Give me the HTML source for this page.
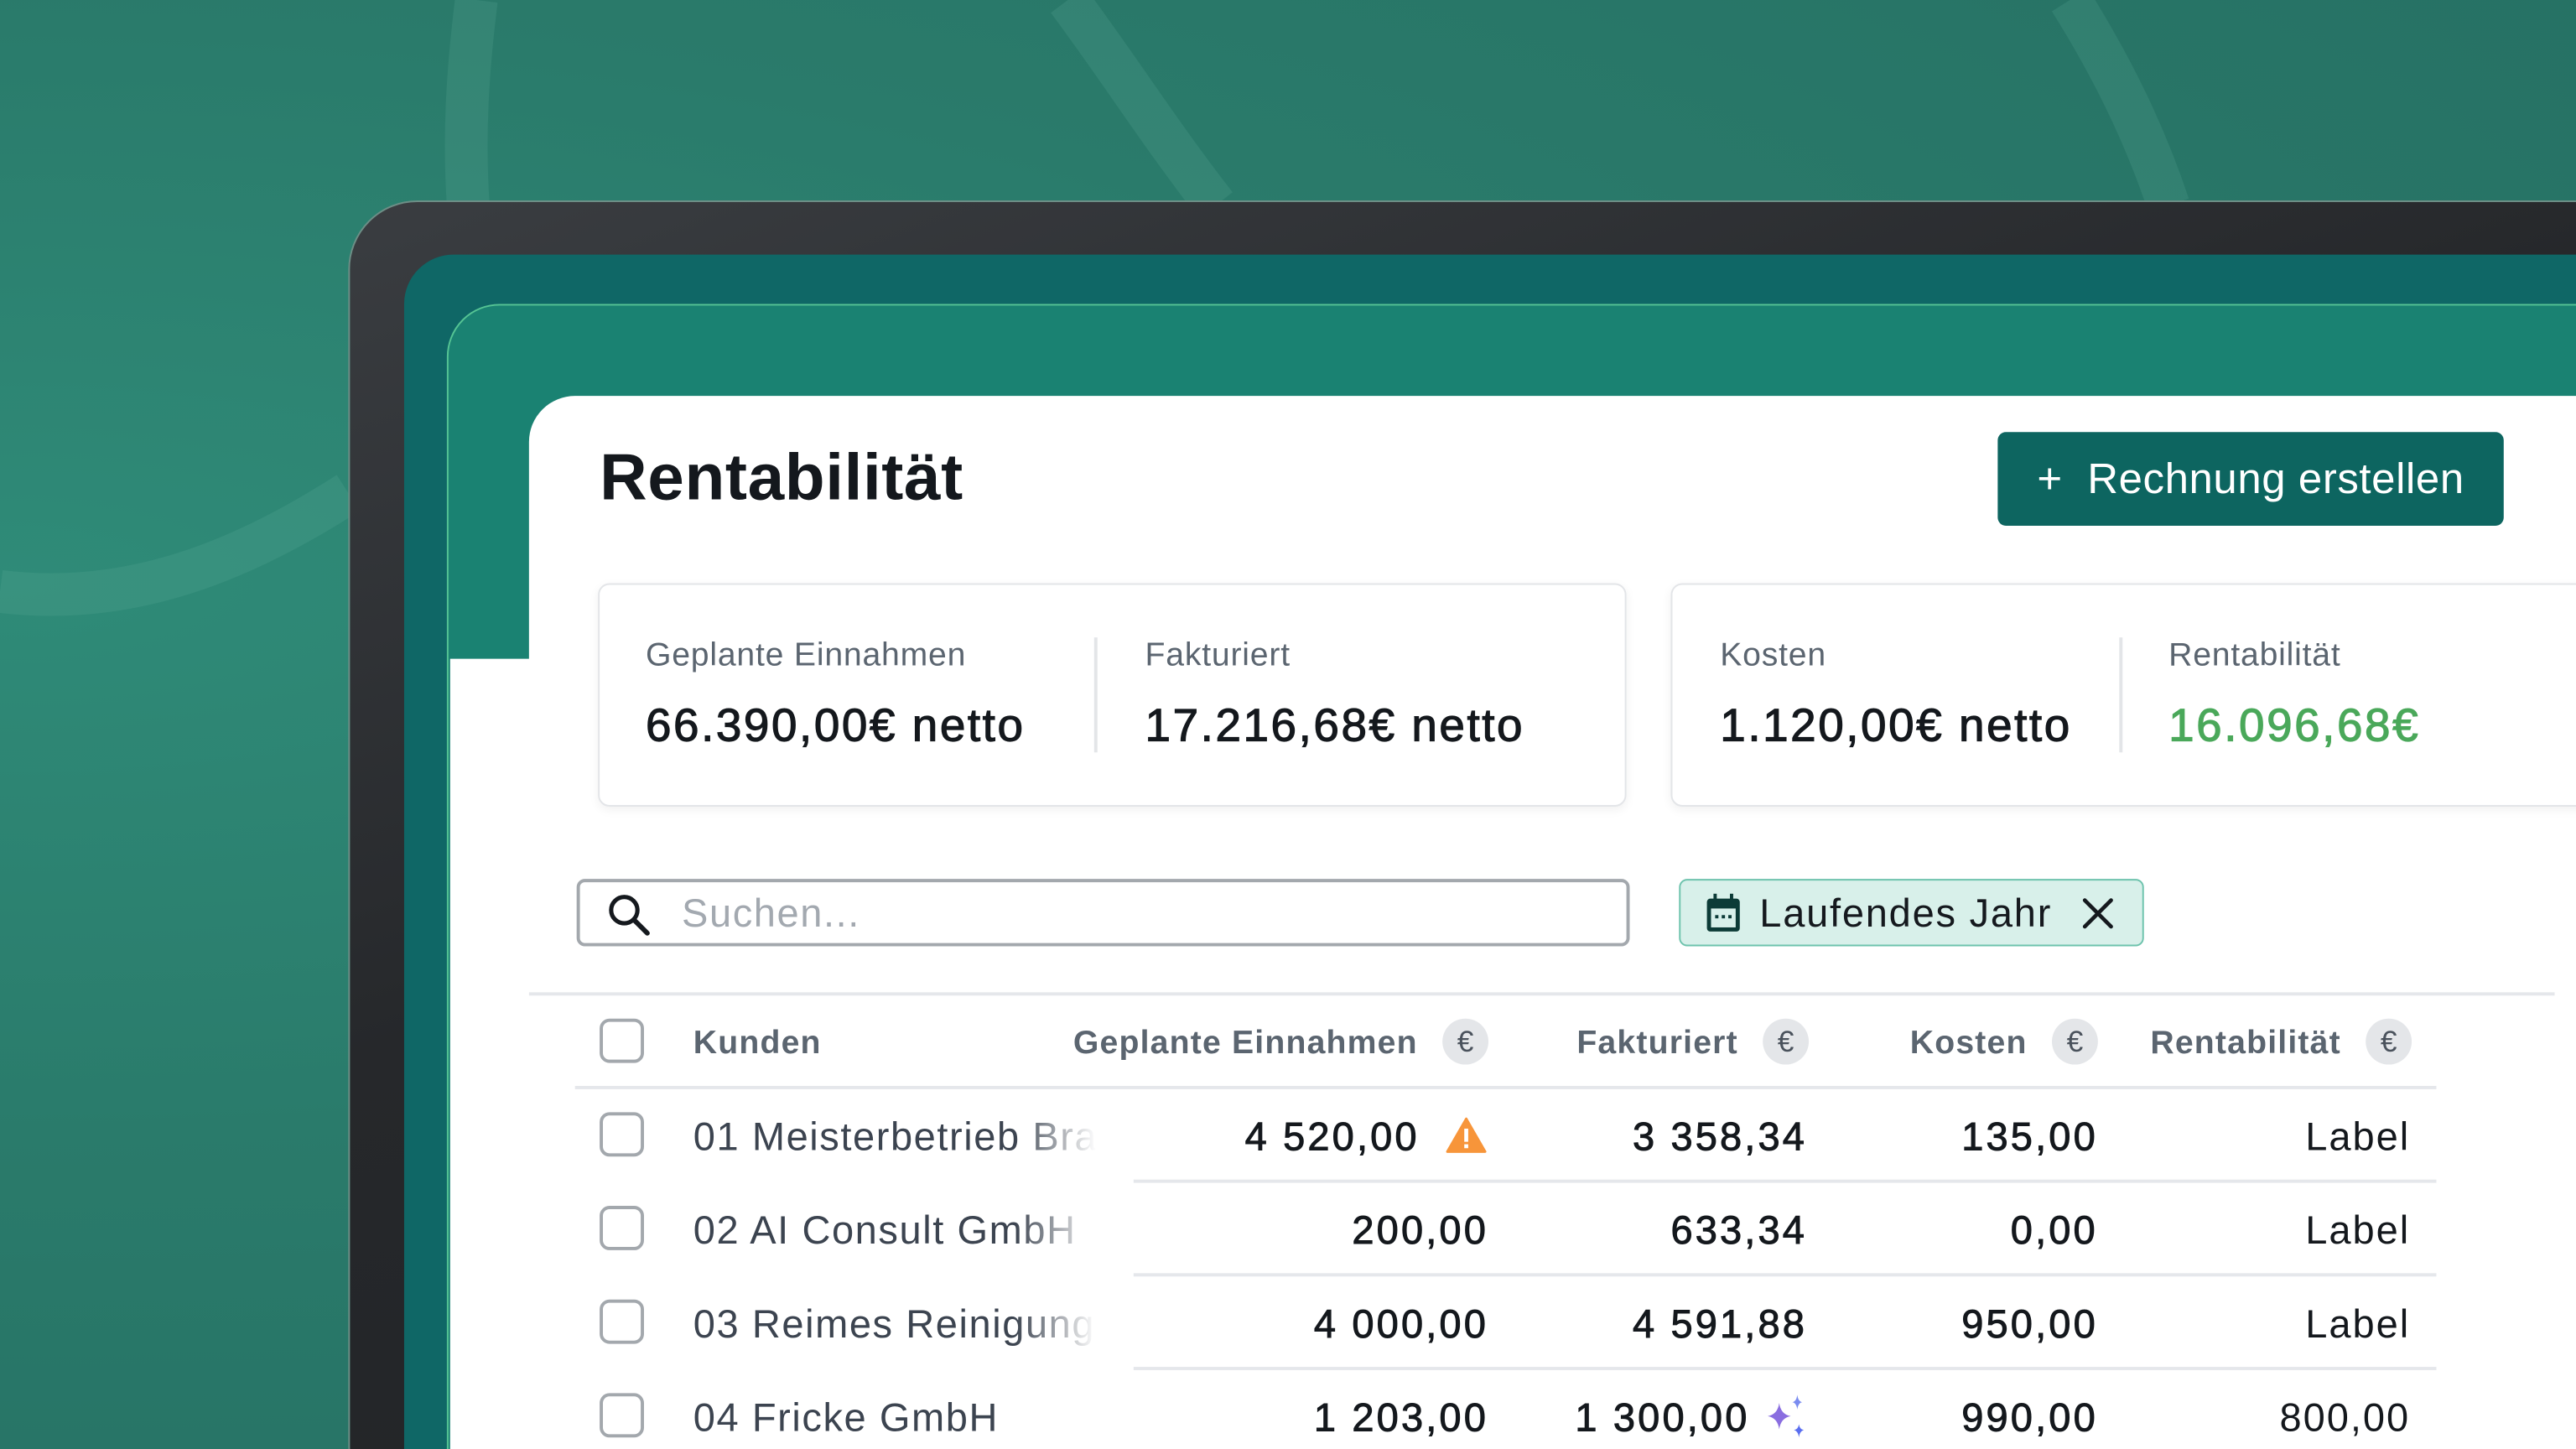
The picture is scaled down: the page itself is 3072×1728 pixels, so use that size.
<!DOCTYPE html>
<html><head><meta charset="utf-8"><style>
*{margin:0;padding:0;box-sizing:border-box}
html,body{width:3072px;height:1728px;overflow:hidden;background:#2a7a6b}
#w{position:absolute;left:0;top:0;width:1568px;height:882px;transform:scale(1.95918);transform-origin:0 0;overflow:hidden;font-family:"Liberation Sans",sans-serif;background:radial-gradient(ellipse at 0% 40%,#2f8b78 0%,#2a7b6b 45%,#256e62 100%)}
.a{position:absolute}
.t{position:absolute;white-space:nowrap}
.lbl{font-size:20px;color:#5b6570;letter-spacing:0.4px}
.val{font-size:28px;color:#14181d;letter-spacing:1.3px;-webkit-text-stroke:0.6px #14181d}
.hd{font-size:20px;color:#5b6570;font-weight:bold;letter-spacing:0.6px}
.eu{position:absolute;width:28px;height:28px;border-radius:50%;background:#e4e6e9;color:#4a525c;font-size:18px;text-align:center;line-height:28px}
.cb{position:absolute;left:365px;width:27px;height:27px;border:2px solid #a3a8ad;border-radius:6px;background:#fff}
.num{position:absolute;font-size:24px;color:#14181d;text-align:right;white-space:nowrap;letter-spacing:1.6px;-webkit-text-stroke:0.5px #14181d}
.nm{position:absolute;left:422px;font-size:24px;color:#3c4450;white-space:nowrap;width:245px;overflow:hidden;letter-spacing:0.8px;-webkit-mask-image:linear-gradient(90deg,#000 80%,transparent 100%)}
.ln{position:absolute;height:2px;background:#e5e7eb}
</style></head><body><div id="w">
<svg class="a" style="left:0;top:0" width="1568" height="882">
<g fill="none" stroke="#6fb8a6" stroke-opacity="0.16" stroke-width="26">
<path d="M290 0 C285 40 282 80 285 125"/>
<path d="M650 0 C680 40 705 80 740 125"/>
<path d="M1260 0 C1285 40 1305 80 1320 125"/>
<path d="M0 360 C80 370 150 340 212 300"/>
</g></svg>
<div class="a" style="left:212px;top:122px;width:1400px;height:800px;border-radius:42px;background:linear-gradient(160deg,#3a3d41 0%,#26282b 40%,#1e2023 100%);border:1.5px solid #6d8e86"></div>
<div class="a" style="left:246px;top:155px;width:1400px;height:800px;border-radius:30px;background:#0f6766"></div>
<div class="a" style="left:272px;top:185px;width:1400px;height:800px;border-radius:32px;background:#1a8272;border:1.5px solid #55c494"></div>
<div class="a" style="left:274px;top:401px;width:60px;height:500px;background:#fff"></div>
<div class="a" style="left:322px;top:241px;width:1400px;height:800px;border-radius:28px 0 0 0;background:#fff"></div>

<div class="t" style="left:365px;top:269px;font-size:40px;font-weight:bold;color:#14181d;letter-spacing:0.3px">Rentabilität</div>
<div class="a" style="left:1216px;top:263px;width:308px;height:57px;border-radius:5px;background:#0d6560;color:#fff;font-size:26px;line-height:57px;text-align:center;letter-spacing:0.3px">+&nbsp; Rechnung erstellen</div>

<div class="a" style="left:364px;top:355px;width:626px;height:136px;border:1px solid #e3e5e8;border-radius:7px;box-shadow:0 2px 6px rgba(0,0,0,.06)"></div>
<div class="a" style="left:1017px;top:355px;width:600px;height:136px;border:1px solid #e3e5e8;border-radius:7px;box-shadow:0 2px 6px rgba(0,0,0,.06)"></div>
<div class="a" style="left:666px;top:388px;width:1.5px;height:70px;background:#e3e5e8"></div>
<div class="a" style="left:1290px;top:388px;width:1.5px;height:70px;background:#e3e5e8"></div>
<div class="t lbl" style="left:393px;top:388px">Geplante Einnahmen</div>
<div class="t val" style="left:393px;top:426px">66.390,00€ netto</div>
<div class="t lbl" style="left:697px;top:388px">Fakturiert</div>
<div class="t val" style="left:697px;top:426px">17.216,68€ netto</div>
<div class="t lbl" style="left:1047px;top:388px">Kosten</div>
<div class="t val" style="left:1047px;top:426px">1.120,00€ netto</div>
<div class="t lbl" style="left:1320px;top:388px">Rentabilität</div>
<div class="t val" style="left:1320px;top:426px;color:#4aa85a;-webkit-text-stroke:0.6px #4aa85a">16.096,68€</div>

<div class="a" style="left:351px;top:535px;width:641px;height:41px;border:2px solid #a3a8ad;border-radius:5px"></div>
<svg class="a" style="left:369px;top:543px" width="28" height="28" viewBox="0 0 28 28"><circle cx="11" cy="11" r="8" fill="none" stroke="#15191e" stroke-width="2.6"/><path d="M17 17 L25 25" stroke="#15191e" stroke-width="3" stroke-linecap="round"/></svg>
<div class="t" style="left:415px;top:543px;font-size:24px;color:#a3a9b0;letter-spacing:0.8px">Suchen...</div>

<div class="a" style="left:1022px;top:535px;width:283px;height:41px;border:1.5px solid #6ec3ad;border-radius:5px;background:#d8f0ea"></div>
<svg class="a" style="left:1037px;top:543px" width="24" height="26" viewBox="0 0 24 26"><rect x="2" y="4" width="20" height="20" rx="2" fill="#0c3b37"/><rect x="4.5" y="10" width="15" height="11.5" fill="#d8f0ea"/><rect x="6" y="1" width="2" height="5" fill="#0c3b37"/><rect x="16" y="1" width="2" height="5" fill="#0c3b37"/><rect x="7" y="14" width="2" height="2" fill="#0c3b37"/><rect x="11" y="14" width="2" height="2" fill="#0c3b37"/><rect x="15" y="14" width="2" height="2" fill="#0c3b37"/></svg>
<div class="t" style="left:1071px;top:543px;font-size:24px;color:#15191e;letter-spacing:0.9px">Laufendes Jahr</div>
<svg class="a" style="left:1267px;top:546px" width="20" height="20" viewBox="0 0 20 20"><path d="M2 2 L18 18 M18 2 L2 18" stroke="#15191e" stroke-width="2.4" stroke-linecap="round"/></svg>

<div class="ln" style="left:322px;top:604px;width:1233px"></div>
<div class="cb" style="top:620px"></div>
<div class="t hd" style="left:422px;top:624px">Kunden</div>
<div class="t hd" style="right:705px;top:624px">Geplante Einnahmen</div><div class="eu" style="left:878px;top:620px">€</div>
<div class="t hd" style="right:510px;top:624px">Fakturiert</div><div class="eu" style="left:1073px;top:620px">€</div>
<div class="t hd" style="right:334px;top:624px">Kosten</div><div class="eu" style="left:1249px;top:620px">€</div>
<div class="t hd" style="right:143px;top:624px">Rentabilität</div><div class="eu" style="left:1440px;top:620px">€</div>
<div class="ln" style="left:350px;top:661px;width:1133px"></div>

<div class="cb" style="top:677px"></div><div class="nm" style="top:679px">01 Meisterbetrieb Braun</div>
<div class="num" style="right:704px;top:679px">4 520,00</div>
<svg class="a" style="left:880px;top:680px" width="25" height="22" viewBox="0 0 25 22"><path d="M12.5 1 L24 21 H1 Z" fill="#f7953a" stroke="#f7953a" stroke-linejoin="round" stroke-width="1.5"/><rect x="11.3" y="7" width="2.4" height="8" fill="#fff"/><rect x="11.3" y="16.5" width="2.4" height="2.4" fill="#fff"/></svg>
<div class="num" style="right:468px;top:679px">3 358,34</div>
<div class="num" style="right:291px;top:679px">135,00</div>
<div class="num" style="right:101px;top:679px;-webkit-text-stroke:0;letter-spacing:1px">Label</div>
<div class="ln" style="left:690px;top:718px;width:793px"></div>

<div class="cb" style="top:734px"></div><div class="nm" style="top:736px">02 AI Consult GmbH</div>
<div class="num" style="right:662px;top:736px">200,00</div>
<div class="num" style="right:468px;top:736px">633,34</div>
<div class="num" style="right:291px;top:736px">0,00</div>
<div class="num" style="right:101px;top:736px;-webkit-text-stroke:0;letter-spacing:1px">Label</div>
<div class="ln" style="left:690px;top:775px;width:793px"></div>

<div class="cb" style="top:791px"></div><div class="nm" style="top:793px">03 Reimes Reinigung</div>
<div class="num" style="right:662px;top:793px">4 000,00</div>
<div class="num" style="right:468px;top:793px">4 591,88</div>
<div class="num" style="right:291px;top:793px">950,00</div>
<div class="num" style="right:101px;top:793px;-webkit-text-stroke:0;letter-spacing:1px">Label</div>
<div class="ln" style="left:690px;top:832px;width:793px"></div>

<div class="cb" style="top:848px"></div><div class="nm" style="top:850px">04 Fricke GmbH</div>
<div class="num" style="right:662px;top:850px">1 203,00</div>
<div class="num" style="right:503px;top:850px">1 300,00</div>
<svg class="a" style="left:1073px;top:848px" width="28" height="28" viewBox="0 0 28 28"><path d="M10 6 Q11 13 17 14 Q11 15 10 22 Q9 15 3 14 Q9 13 10 6Z" fill="#8a6ee0"/><path d="M21 1 Q21.5 5 24 5.5 Q21.5 6 21 10 Q20.5 6 18 5.5 Q20.5 5 21 1Z" fill="#7a8cf0"/><path d="M22 19 Q22.5 22 25 22.5 Q22.5 23 22 27 Q21.5 23 19 22.5 Q21.5 22 22 19Z" fill="#5a6ef0"/></svg>
<div class="num" style="right:291px;top:850px">990,00</div>
<div class="num" style="right:101px;top:850px;-webkit-text-stroke:0;letter-spacing:1px">800,00</div>
</div></body></html>
